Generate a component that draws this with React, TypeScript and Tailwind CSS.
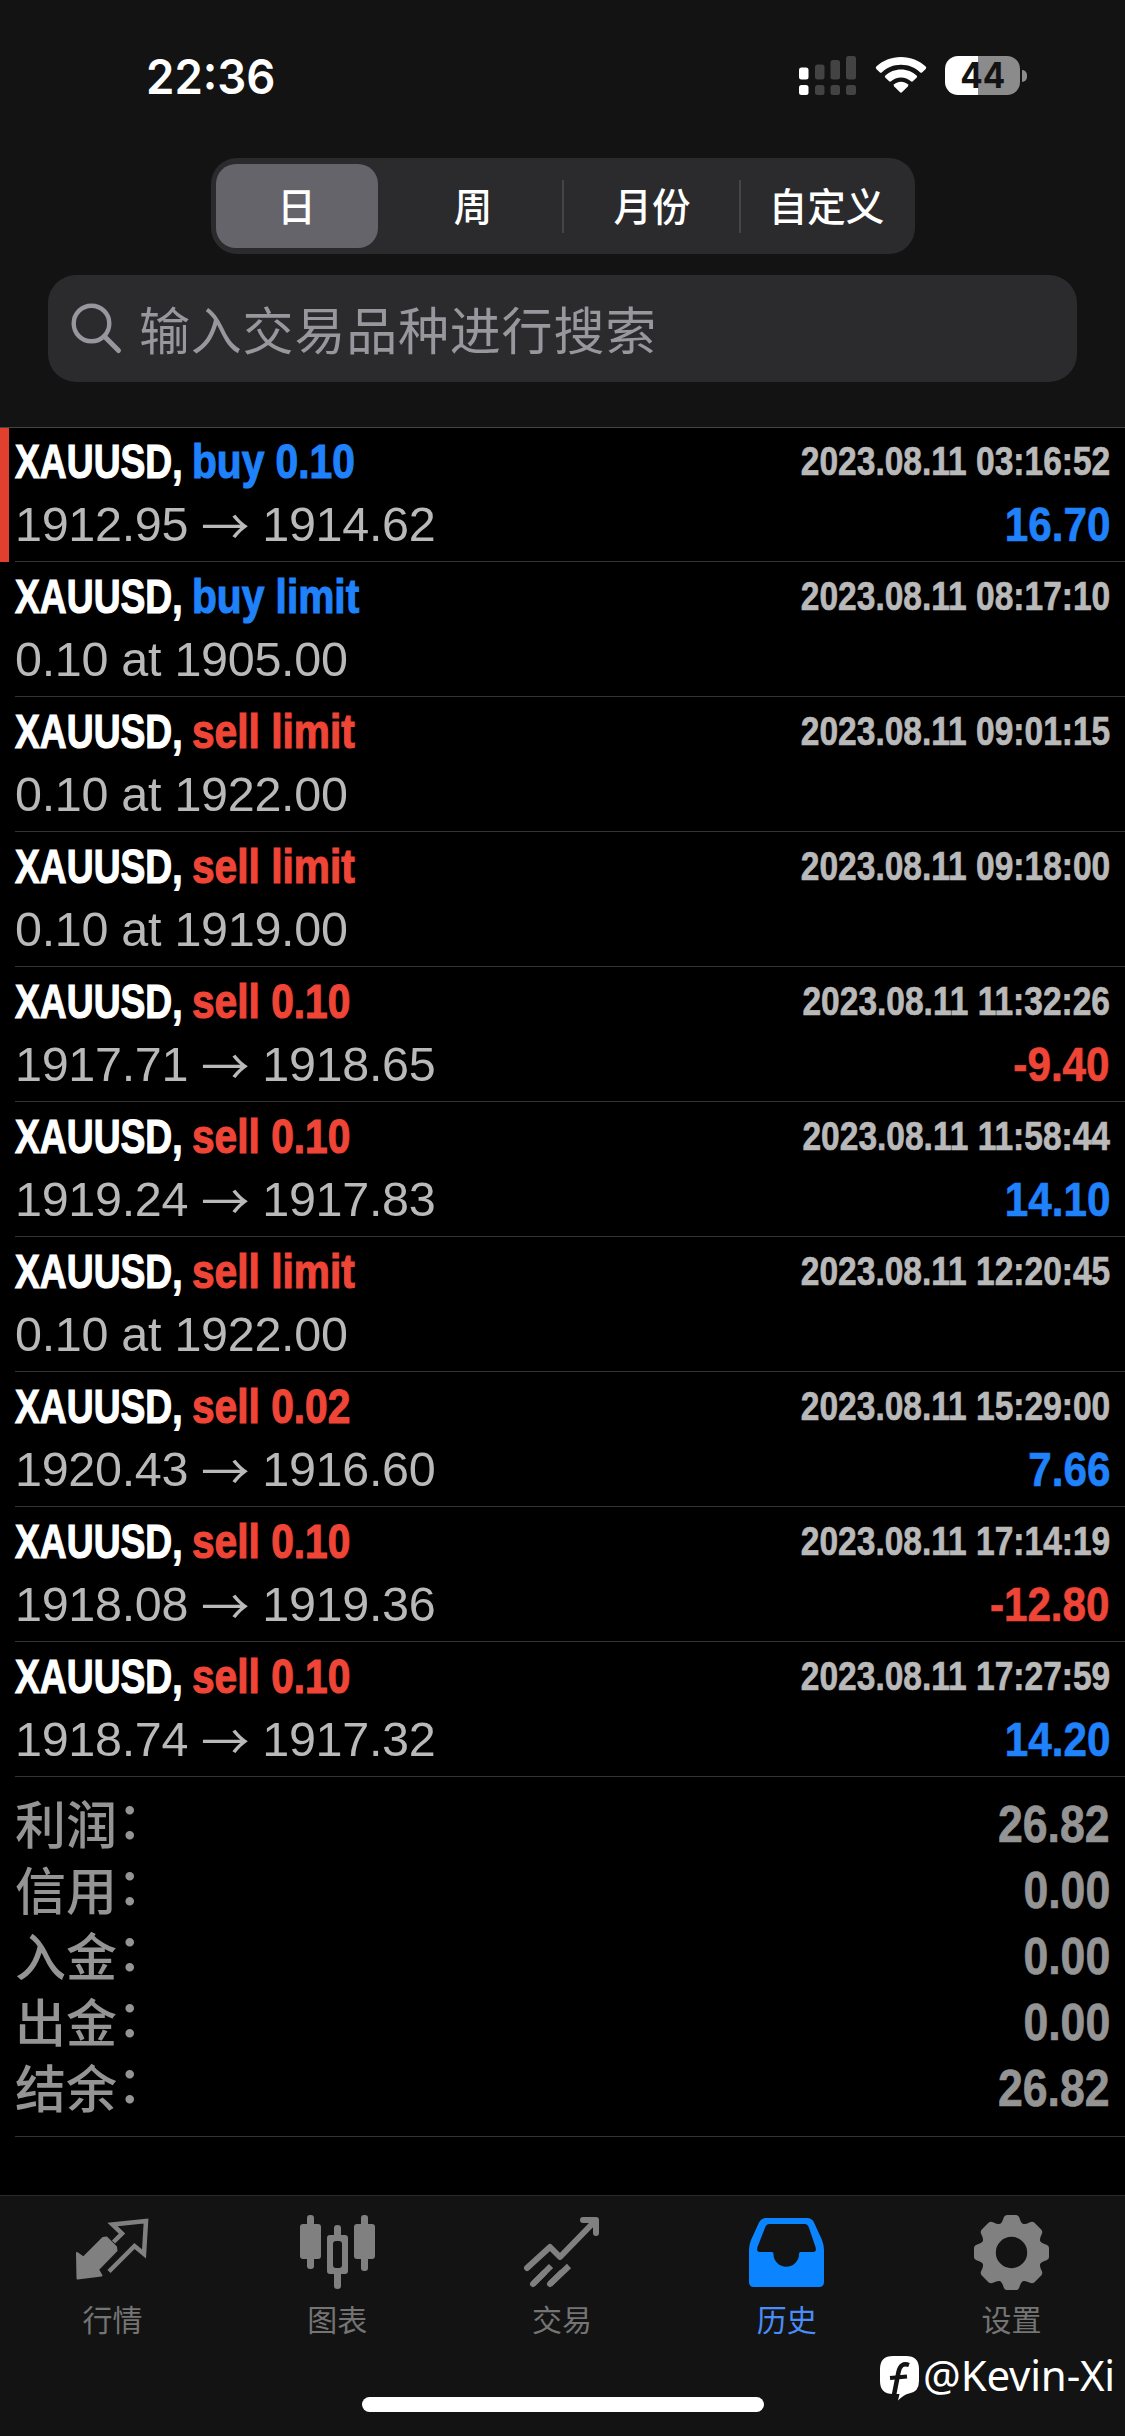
import type { ReactNode } from "react";
import clsx from "clsx";

type Deal = {
  action: string;
  side: "buy" | "sell";
  detail?: string;
  open?: string;
  close?: string;
  time: string;
  profit?: string;
};

const deals: Deal[] = [
  { action: "buy 0.10", side: "buy", open: "1912.95", close: "1914.62", time: "2023.08.11 03:16:52", profit: "16.70" },
  { action: "buy limit", side: "buy", detail: "0.10 at 1905.00", time: "2023.08.11 08:17:10" },
  { action: "sell limit", side: "sell", detail: "0.10 at 1922.00", time: "2023.08.11 09:01:15" },
  { action: "sell limit", side: "sell", detail: "0.10 at 1919.00", time: "2023.08.11 09:18:00" },
  { action: "sell 0.10", side: "sell", open: "1917.71", close: "1918.65", time: "2023.08.11 11:32:26", profit: "-9.40" },
  { action: "sell 0.10", side: "sell", open: "1919.24", close: "1917.83", time: "2023.08.11 11:58:44", profit: "14.10" },
  { action: "sell limit", side: "sell", detail: "0.10 at 1922.00", time: "2023.08.11 12:20:45" },
  { action: "sell 0.02", side: "sell", open: "1920.43", close: "1916.60", time: "2023.08.11 15:29:00", profit: "7.66" },
  { action: "sell 0.10", side: "sell", open: "1918.08", close: "1919.36", time: "2023.08.11 17:14:19", profit: "-12.80" },
  { action: "sell 0.10", side: "sell", open: "1918.74", close: "1917.32", time: "2023.08.11 17:27:59", profit: "14.20" },
];

const totals = [
  { label: "利润", value: "26.82" },
  { label: "信用", value: "0.00" },
  { label: "入金", value: "0.00" },
  { label: "出金", value: "0.00" },
  { label: "结余", value: "26.82" },
];

export default function App() {
  return (
    <div className="w-[1125px] h-[2436px] bg-black overflow-hidden flex flex-col font-['Liberation_Sans','Noto_Sans_CJK_SC',sans-serif]">
      <header className="h-[428px] shrink-0 bg-[#131313] border-b border-[#454545] flex flex-col items-center">
        <StatusBar />
        <PeriodTabs />
        <SearchBox />
      </header>
      <main className="flex-1">
        {deals.map((deal, i) => (
          <DealRow key={deal.time} deal={deal} first={i === 0} />
        ))}
        <Totals />
      </main>
      <TabBar />
    </div>
  );
}

const StatusBar = () => {
  return (
    <div className="w-full h-[158px] pl-[146px] pr-[98px] flex flex-row justify-between">
      <p className="mt-[47px] h-[60px] leading-[60px] text-[48px] font-semibold text-white origin-left scale-x-[0.95] font-['Inter',sans-serif]">
        22:36
      </p>
      <div className="flex flex-row mt-[56px] h-[40px]">
        <svg width="58" height="40" viewBox="0 0 58 40" fill="#434343">
          <g fill="#fff">
            <rect x="0" y="11.5" width="9.5" height="12" rx="2.5" />
            <rect x="0" y="29" width="9.5" height="10" rx="2.5" />
          </g>
          <rect x="16" y="8.5" width="9.5" height="15" rx="2.5" />
          <rect x="16" y="29" width="9.5" height="10" rx="2.5" />
          <rect x="31.5" y="4" width="9.5" height="19.5" rx="2.5" />
          <rect x="31.5" y="29" width="9.5" height="10" rx="2.5" />
          <rect x="47" y="0" width="10" height="23.5" rx="2.5" />
          <rect x="47" y="29" width="10" height="10" rx="2.5" />
        </svg>
        <svg className="ml-[18px]" width="52" height="40" viewBox="0 0 52 40" fill="#fff">
          <path d="M26 1C35.5 1 44.5 4.7 50.7 10.6Q51.8 11.8 50.7 12.9L47.3 16.2Q46.2 17.2 45 16.2C40 11.5 33.5 8.8 26 8.8S12 11.5 7 16.2Q5.8 17.2 4.7 16.2L1.3 12.9Q.2 11.8 1.3 10.6C7.5 4.7 16.5 1 26 1Z" />
          <path d="M26 13.5C32 13.5 37.5 15.8 41.6 19.5Q42.7 20.6 41.6 21.7L38.1 25.1Q37 26.1 35.9 25.2C33.3 22.8 29.9 21.4 26 21.4S18.7 22.8 16.1 25.2Q15 26.1 13.9 25.1L10.4 21.7Q9.3 20.6 10.4 19.5C14.5 15.8 20 13.5 26 13.5Z" />
          <path d="M26 25.7C28.6 25.7 31 26.7 32.8 28.3Q33.8 29.4 32.8 30.5L27.2 36.1Q26 37.2 24.8 36.1L19.2 30.5Q18.2 29.4 19.2 28.3C21 26.7 23.4 25.7 26 25.7Z" />
        </svg>
        <div className="ml-[18px] flex flex-row">
          <div
            className="w-[75px] h-[39px] rounded-[13px] flex items-center justify-center
              bg-linear-to-r from-white from-44% to-[#8b8b8b] to-44%"
          >
            <p className="text-[35px] leading-[39px] font-bold text-[#131313] font-['Inter',sans-serif] scale-x-[0.95]">
              44
            </p>
          </div>
          <div className="w-[5px] h-[12px] mt-[14px] ml-[2px] rounded-r-[6px] bg-[#8b8b8b]" />
        </div>
      </div>
    </div>
  );
};

const PeriodTabs = () => {
  return (
    <div
      className="w-[704px] h-[96px] shrink-0 rounded-[26px] bg-[#2b2b2d] p-[6px] pl-[5px] flex flex-row items-center
        text-white text-[38.5px] font-medium font-['Noto_Sans_CJK_SC',sans-serif]"
    >
      <div className="w-[162px] h-[84px] rounded-[20px] bg-[#65646b] flex items-center justify-center">
        <Period>日</Period>
      </div>
      <div className="w-[184px] pl-[7px] flex justify-center">
        <Period>周</Period>
      </div>
      <div className="w-[2px] h-[53px] bg-[#454547]" />
      <div className="w-[175px] pl-[2px] flex justify-center">
        <Period>月份</Period>
      </div>
      <div className="w-[2px] h-[53px] bg-[#454547]" />
      <div className="flex-1 pl-[4px] flex justify-center">
        <Period>自定义</Period>
      </div>
    </div>
  );
};

const Period = ({ children }: { children: ReactNode }) => {
  return <p className="leading-[54px] pb-[4px] whitespace-nowrap">{children}</p>;
};

const SearchBox = () => {
  return (
    <div className="w-[1029px] h-[107px] mt-[21px] shrink-0 rounded-[28px] bg-[#2b2b2d] pl-[23px] flex flex-row items-center">
      <svg width="52" height="52" viewBox="0 0 52 52" fill="none" stroke="#98979e" strokeLinecap="round">
        <circle cx="20.5" cy="20.5" r="17.8" strokeWidth="4.4" />
        <path d="M34 34L47.5 47.5" strokeWidth="5" />
      </svg>
      <p className="ml-[16px] pb-[2px] text-[51px] leading-[70px] tracking-[0.8px] text-[#98979e] font-['Noto_Sans_CJK_SC',sans-serif]">
        输入交易品种进行搜索
      </p>
    </div>
  );
};

const DealRow = ({ deal, first }: { deal: Deal; first: boolean }) => {
  return (
    <div className={clsx("flex flex-row", first ? "h-[134px]" : "h-[135px]")}>
      <div className={clsx("w-[9px]", first && "bg-[#e2402f]")} />
      <div className="flex-1 ml-[6px] pr-[15px] pb-[5px] border-b border-[#333] flex flex-col justify-end">
        <div className="h-[63px] flex flex-row justify-between items-center font-bold">
          <div className="flex flex-row text-[49px] leading-[63px] whitespace-nowrap [-webkit-text-stroke:1.2px]">
            <p className="w-[177px] text-white">
              <span className="inline-block origin-left scale-x-[0.76]">XAUUSD,</span>
            </p>
            <p
              className={clsx(
                "origin-left scale-x-[0.83]",
                deal.side === "buy" ? "text-[#1f82fb]" : "text-[#ef4537]"
              )}
            >
              {deal.action}
            </p>
          </div>
          <p className="text-[40px] leading-[61px] text-[#b9b9b9] whitespace-nowrap origin-right scale-x-[0.838] [-webkit-text-stroke:0.7px]">
            {deal.time}
          </p>
        </div>
        <div className="h-[63px] flex flex-row justify-between text-[48.5px] leading-[63px]">
          <p className="text-[#b9b9b9] flex flex-row whitespace-pre tracking-[-0.3px]">
            {deal.detail ?? (
              <>
                {deal.open}
                <span className="w-[74px] flex justify-center font-['Noto_Sans_CJK_SC',sans-serif]">→</span>
                {deal.close}
              </>
            )}
          </p>
          {deal.profit && (
            <p
              className={clsx(
                "font-bold origin-right scale-x-[0.87] [-webkit-text-stroke:0.7px]",
                deal.profit.startsWith("-") ? "text-[#ef4537]" : "text-[#1f82fb]"
              )}
            >
              {deal.profit}
            </p>
          )}
        </div>
      </div>
    </div>
  );
};

const Totals = () => {
  return (
    <div className="ml-[15px] pr-[15px] pt-[14px] pb-[15px] border-b border-[#333] text-[#949494]">
      {totals.map((item) => (
        <div key={item.label} className="h-[66px] flex flex-row justify-between">
          <p className="text-[51px] leading-[63px] font-medium font-['Noto_Sans_CJK_SC',sans-serif]">
            {item.label}
            <span className="relative -top-[5px]">：</span>
          </p>
          <p className="text-[51px] leading-[68px] font-bold origin-right scale-x-[0.875] [-webkit-text-stroke:0.7px]">
            {item.value}
          </p>
        </div>
      ))}
    </div>
  );
};

const TabBar = () => {
  return (
    <nav className="h-[241px] shrink-0 bg-[#131313] border-t border-[#2c2c2c] flex flex-col relative">
      <div className="flex flex-row pr-[1px] text-[#808080]">
        <Tab label="行情">
          <path
            d="M2 38L8.5 42.5L28 23L31.5 22.5L41 32L41.5 35.5L23 54.5L26.5 60.5L2.5 63.5Z"
            stroke="currentColor"
            strokeWidth="2"
            strokeLinejoin="round"
          />
          <path
            d="M38.5 27L47 18.5L37.5 9.5L71 6L69 39L59.5 31L34 56.5"
            fill="none"
            stroke="currentColor"
            strokeWidth="4.5"
          />
        </Tab>
        <Tab label="图表">
          <rect x="7" y="0" width="7" height="54" rx="3" />
          <rect x="0" y="9" width="21" height="35" rx="3" />
          <rect x="61" y="0" width="7" height="56" rx="3" />
          <rect x="54" y="9" width="21" height="35" rx="3" />
          <path
            fillRule="evenodd"
            d="M34 13Q34 10 37.5 10T41 13V20H45Q48 20 48 23V56Q48 59 45 59H41V71Q41 74 37.5 74T34 71V59H30Q27 59 27 56V23Q27 20 30 20H34ZM36 26Q33 26 33 29V50Q33 53 36 53H39Q42 53 42 50V29Q42 26 39 26Z"
          />
        </Tab>
        <Tab label="交易">
          <g fill="none" stroke="currentColor" strokeWidth="6" strokeLinecap="round" strokeLinejoin="round">
            <path d="M3 53L26 32L36 42L71 6" />
            <path d="M59 5H72V18" />
            <path d="M9 69L27 51" strokeLinecap="butt" />
            <path d="M26 69L45 51" strokeLinecap="butt" />
            <path d="M9 69L20 58M26 69L37 58" />
          </g>
        </Tab>
        <Tab label="历史" active>
          <path
            fillRule="evenodd"
            d="M17 3H58Q63 3 65 7.5L73 25Q75 30 75 35V67Q75 72 70 72H5Q0 72 0 67V35Q0 30 2 25L10 7.5Q12 3 17 3ZM20 9Q17.5 9 16.5 11.5L8.5 32Q7 37 11 37H23Q24.5 37 24.5 39A12.7 12.7 0 0 0 50 39Q50 37 51.5 37H64Q68 37 66.5 32L59.5 11.5Q58.5 9 56 9Z"
          />
        </Tab>
        <Tab label="设置">
          <path
            fillRule="evenodd"
            d="M33 0H42Q44.5 0 45.3 2.5Q47 8.5 49.5 9Q51.5 9.5 56 7.2Q58.5 6 60.5 7.8L67.2 14.5Q69 16.5 67.8 19Q65.5 23.5 66 25.5Q66.5 28 72.5 29.7Q75 30.5 75 33V42Q75 44.5 72.5 45.3Q66.5 47 66 49.5Q65.5 51.5 67.8 56Q69 58.5 67.2 60.5L60.5 67.2Q58.5 69 56 67.8Q51.5 65.5 49.5 66Q47 66.5 45.3 72.5Q44.5 75 42 75H33Q30.5 75 29.7 72.5Q28 66.5 25.5 66Q23.5 65.5 19 67.8Q16.5 69 14.5 67.2L7.8 60.5Q6 58.5 7.2 56Q9.5 51.5 9 49.5Q8.5 47 2.5 45.3Q0 44.5 0 42V33Q0 30.5 2.5 29.7Q8.5 28 9 25.5Q9.5 23.5 7.2 19Q6 16.5 7.8 14.5L14.5 7.8Q16.5 6 19 7.2Q23.5 9.5 25.5 9Q28 8.5 29.7 2.5Q30.5 0 33 0ZM37.5 21.8A15.7 15.7 0 1 0 37.5 53.2A15.7 15.7 0 1 0 37.5 21.8Z"
          />
        </Tab>
      </div>
      <Watermark />
      <div className="absolute left-[362px] top-[201px] w-[402px] h-[15px] rounded-full bg-white" />
    </nav>
  );
};

const Tab = ({ label, active, children }: { label: string; active?: boolean; children: ReactNode }) => {
  return (
    <div className={clsx("flex-1 pt-[19px] flex flex-col items-center", active && "text-[#0b84ff]")}>
      <svg width="75" height="75" viewBox="0 0 75 75" fill="currentColor">
        {children}
      </svg>
      <p
        className={clsx(
          "mt-[6px] text-[30px] leading-[44px] font-['Noto_Sans_CJK_SC',sans-serif]",
          active ? "text-[#4a8df8]" : "text-[#747474]"
        )}
      >
        {label}
      </p>
    </div>
  );
};

const Watermark = () => {
  return (
    <div className="absolute right-[10px] top-[160px] h-[46px] flex flex-row text-white">
      <svg width="39" height="46" viewBox="0 0 39 46">
        <path
          fill="#fff"
          d="M13 0H26Q39 0 39 13V25Q39 36 29 37.5Q24 38.5 18 44.5L19.5 38H13Q0 38 0 25V13Q0 0 13 0Z"
        />
        <path d="M29 9Q20.5 6 18.5 16L14 39" fill="none" stroke="#131313" strokeWidth="4.5" />
        <path d="M10 22L27 20.5" stroke="#131313" strokeWidth="4" />
      </svg>
      <p className="ml-[4px] text-[42px] leading-[38px] tracking-[-0.2px] font-['Noto_Sans',sans-serif]">@Kevin-Xi</p>
    </div>
  );
};
